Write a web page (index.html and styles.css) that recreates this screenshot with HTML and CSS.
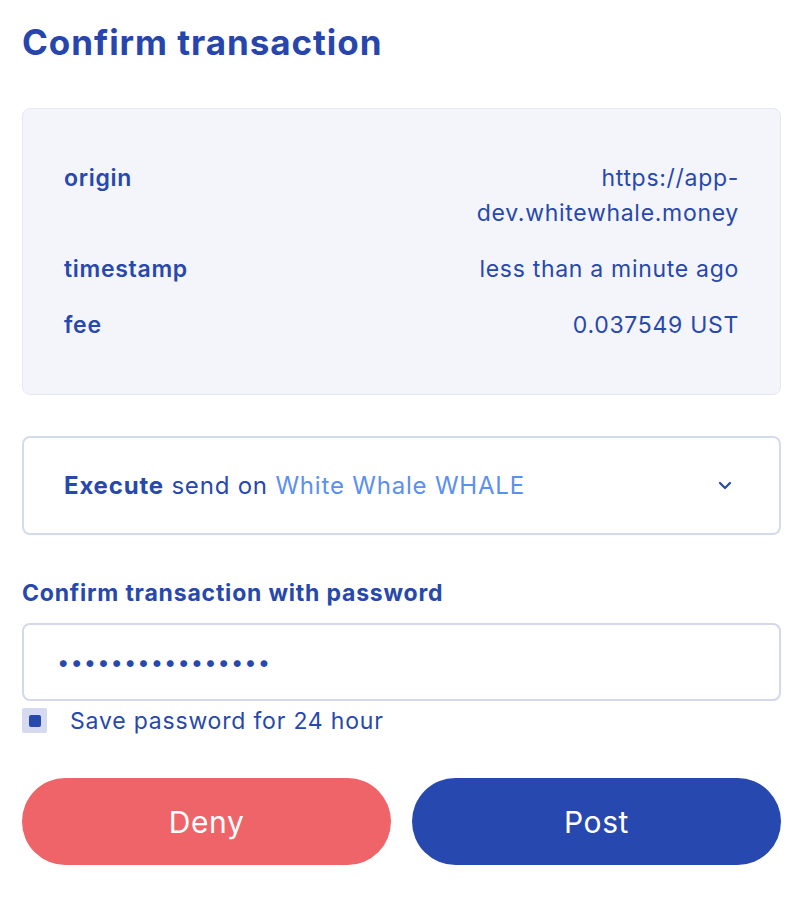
FILE: index.html
```html
<!DOCTYPE html>
<html>
<head>
<meta charset="utf-8">
<link rel="stylesheet" href="styles.css">
</head>
<body>
<main class="page">
  <h1 class="title">Confirm transaction</h1>
  <section class="info">
    <div class="row"><span class="key">origin</span><span class="val">https://app-<br>dev.whitewhale.money</span></div>
    <div class="row"><span class="key">timestamp</span><span class="val">less than a minute ago</span></div>
    <div class="row"><span class="key">fee</span><span class="val">0.037549 UST</span></div>
  </section>
  <section class="msg">
    <p class="msg-text"><strong>Execute</strong> send on <span class="link">White Whale WHALE</span></p>
    <svg class="chev" width="14" height="9" viewBox="0 0 14 9"><path d="M2 2 L7 7 L12 2" fill="none" stroke="#2548ad" stroke-width="2.2" stroke-linecap="round" stroke-linejoin="round"/></svg>
  </section>
  <label class="label">Confirm transaction with password</label>
  <div class="input"><span class="dots">••••••••••••••••</span></div>
  <div class="check"><span class="box"><span class="tick"></span></span><span class="check-label">Save password for 24 hour</span></div>
  <div class="buttons">
    <button class="btn deny">Deny</button>
    <button class="btn post">Post</button>
  </div>
</main>
</body>
</html>
```

FILE: styles.css
```css
* { box-sizing: border-box; }
html, body { margin: 0; padding: 0; background: #fff; }
body { font-family: Inter, "Noto Sans", sans-serif; color: #2748ac; }
.page { padding: 0 15px 0 22px; display: flex; flex-direction: column; }
.title { margin: 0; padding-top: 20px; height: 108px; font-size: 35px; font-weight: 700; line-height: 44px; letter-spacing: 0.95px; color: #2746ad; }
.info { background: #f4f5fb; border: 1px solid #e5e8f4; border-radius: 8px; padding: 52px 41px 51px; display: flex; flex-direction: column; gap: 21px; font-size: 23px; line-height: 35px; letter-spacing: 0.7px; height: 287px; }
.row { display: flex; justify-content: space-between; }
.key { font-weight: 600; }
.val { text-align: right; }
.msg { margin-top: 41px; height: 99px; border: 2px solid #d4dcec; border-radius: 8px; display: flex; align-items: center; justify-content: space-between; padding: 0 47px 0 40px; }
.msg-text { margin: 0; font-size: 24px; letter-spacing: 0.8px; }
.msg-text strong { font-weight: 700; }
.link { color: #5a90ef; }
.label { margin-top: 46px; font-size: 23px; font-weight: 700; line-height: 24px; letter-spacing: 0.8px; }
.input { margin-top: 18px; height: 78px; border: 2px solid #d3d8ea; border-radius: 8px; display: flex; align-items: center; padding-left: 33px; }
.dots { font-size: 22px; letter-spacing: 1px; }
.check { margin-top: 7px; display: flex; align-items: center; gap: 23px; height: 25px; }
.box { width: 25px; height: 25px; background: #d5daf0; border-radius: 2px; display: flex; align-items: center; justify-content: center; }
.tick { width: 12px; height: 12px; background: #2748ac; border-radius: 2px; }
.check-label { font-size: 23px; letter-spacing: 0.8px; }
.buttons { margin-top: 45px; display: flex; gap: 21px; }
.btn { flex: 1; height: 87px; border: 0; border-radius: 44px; color: #fff; font-family: inherit; font-size: 30px; letter-spacing: 0.6px; }
.deny { background: #ee6468; }
.post { background: #2748ae; }
```
